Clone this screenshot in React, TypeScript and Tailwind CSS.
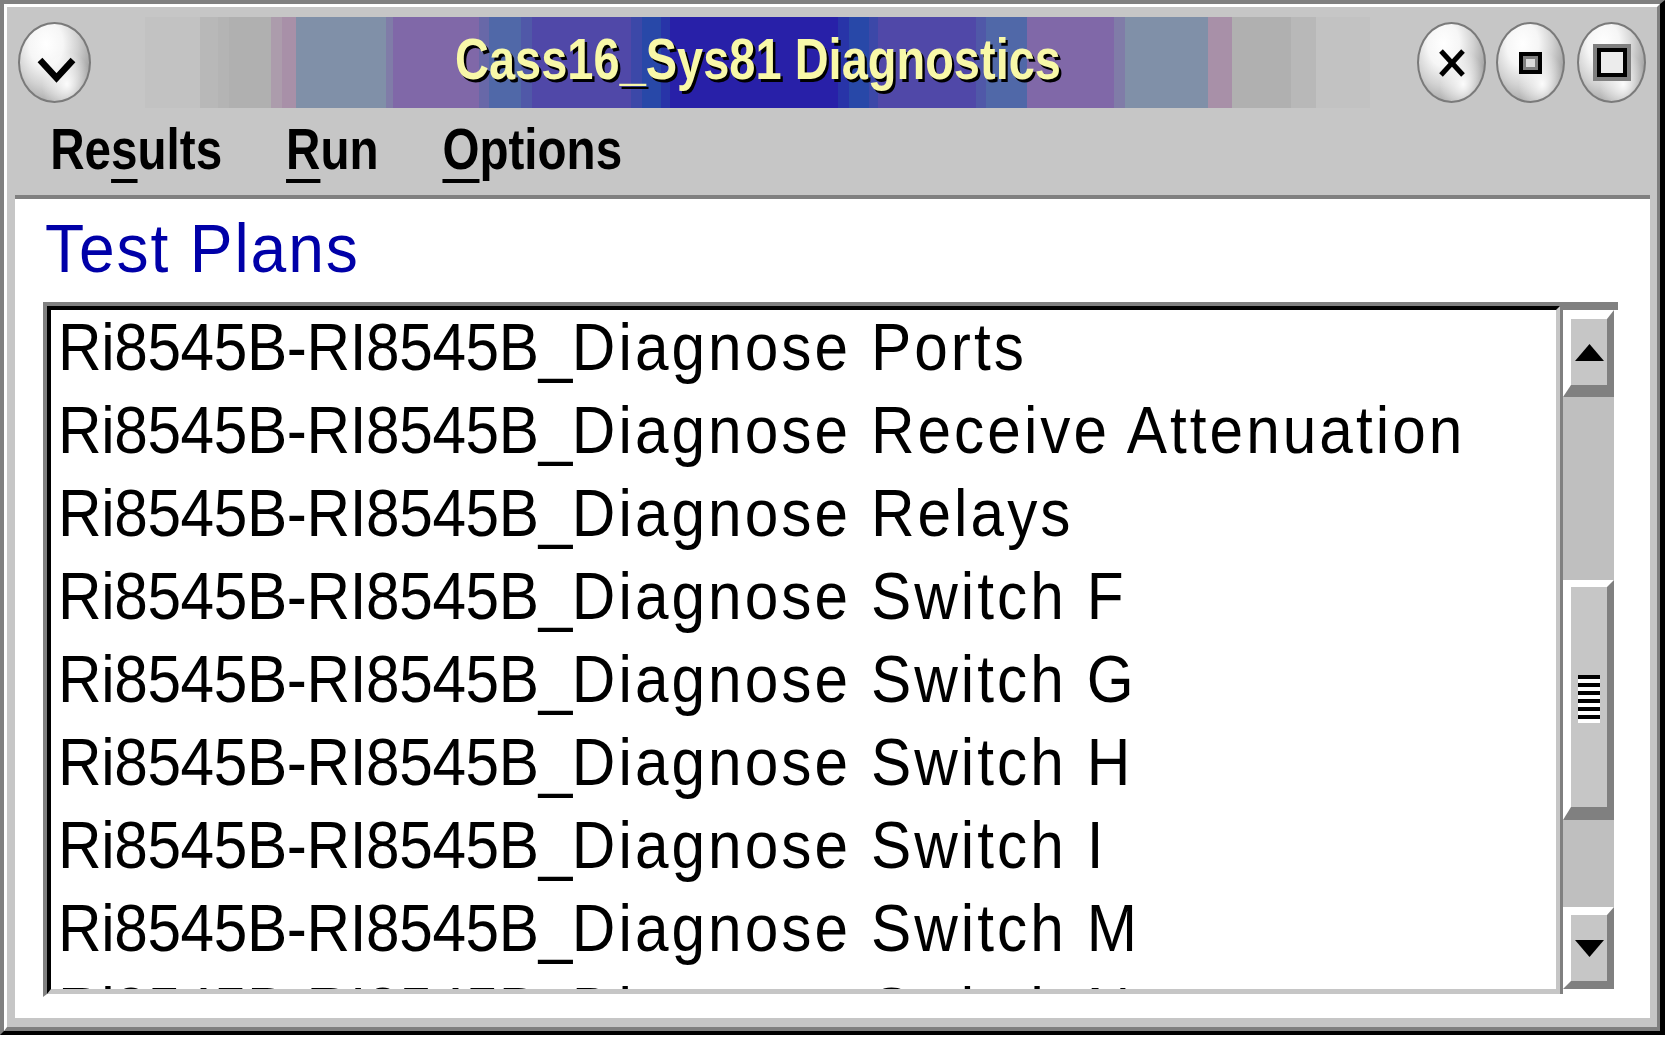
import React from "react";

const SANS = "[font-family:'Liberation_Sans',Arial,sans-serif]";

function Oval({ className, children }: { className: string; children?: React.ReactNode }) {
  return (
    <div
      className={`${className} h-[81px] shrink-0 rounded-[50%] border-[2px] border-[#7a7a7a] bg-[radial-gradient(ellipse_at_68%_78%,rgba(255,255,255,0.95)_0%,rgba(255,255,255,0)_38%),radial-gradient(ellipse_at_38%_26%,#ffffff_0%,#f6f6f6_28%,#d2d2d2_52%,#acacac_72%,#7c7c7c_100%)] flex items-center justify-center`}
    >
      {children}
    </div>
  );
}

const PREFIX = "Ri8545B-RI8545B_";
const rows = [
  "Diagnose Ports",
  "Diagnose Receive Attenuation",
  "Diagnose Relays",
  "Diagnose Switch F",
  "Diagnose Switch G",
  "Diagnose Switch H",
  "Diagnose Switch I",
  "Diagnose Switch M",
  "Diagnose Switch N",
];

export default function App() {
  return (
    <div className="w-[1665px] h-[1038px] bg-white overflow-hidden">
      {/* outer frame */}
      <div className="w-[1665px] h-[1035px] border-t-[4px] border-l-[4px] border-t-[#808080] border-l-[#808080] border-r-[5px] border-b-[4px] border-r-black border-b-black">
        <div className="h-full border-t-[3px] border-l-[3px] border-t-white border-l-white border-r-[3px] border-b-[4px] border-r-[#808080] border-b-[#808080] bg-[#c6c6c6] pt-[10px] pl-[8px] pr-[7px] pb-[9px] flex flex-col">
          {/* title bar */}
          <div className="h-[91px] shrink-0 flex items-center">
            <Oval className="w-[73px] ml-[3px]">
              <svg width="39" height="26" viewBox="0 0 39 26" className="mt-[14px] ml-[4px]">
                <polyline points="3,3 19.5,21 36,3" fill="none" stroke="black" strokeWidth="6.5" strokeLinejoin="miter" />
              </svg>
            </Oval>
            <div className="ml-[54px] w-[1225px] h-[91px] shrink-0 flex justify-center overflow-hidden bg-[linear-gradient(to_right,#c2c2c2_0px,#c2c2c2_55px,#b8b8b8_55px,#b8b8b8_73px,#b4b4b4_73px,#b4b4b4_84px,#b0b0b0_84px,#b0b0b0_126px,#ac9cac_126px,#ac9cac_137px,#a890a8_137px,#a890a8_151px,#8090a8_151px,#8090a8_241px,#807ca8_241px,#807ca8_248px,#8068a8_248px,#8068a8_334px,#6868a8_334px,#6868a8_344px,#5068a8_344px,#5068a8_376px,#5058a8_376px,#5058a8_387px,#5048a8_387px,#5048a8_486px,#3c48a8_486px,#3c48a8_497px,#2848a8_497px,#2848a8_516px,#2834a8_516px,#2834a8_525px,#2820a8_525px,#2820a8_693px,#2834a8_693px,#2834a8_704px,#2848a8_704px,#2848a8_724px,#3c48a8_724px,#3c48a8_733px,#5048a8_733px,#5048a8_831px,#5058a8_831px,#5058a8_841px,#5068a8_841px,#5068a8_882px,#8068a8_882px,#8068a8_969px,#807ca8_969px,#807ca8_980px,#8090a8_980px,#8090a8_1063px,#a890a8_1063px,#a890a8_1087px,#b0b0b0_1087px,#b0b0b0_1146px,#b8b8b8_1146px,#b8b8b8_1171px,#c2c2c2_1171px,#c2c2c2_1225px)]">
              <span className={`${SANS} shrink-0 font-bold text-[58px] leading-[84px] text-[#f8f8a8] whitespace-nowrap scale-x-[0.81] origin-center [text-shadow:3px_3px_0_#000]`}>
                Cass16_Sys81 Diagnostics
              </span>
            </div>
            <Oval className="w-[69px] ml-[47px]">
              <svg width="28" height="30" viewBox="0 0 28 30">
                <line x1="3" y1="3" x2="25" y2="27" stroke="black" strokeWidth="5" />
                <line x1="25" y1="3" x2="3" y2="27" stroke="black" strokeWidth="5" />
              </svg>
            </Oval>
            <Oval className="w-[69px] ml-[10px]">
              <div className="w-[23px] h-[22px] border-[4px] border-black">
                <div className="w-full h-full border-[3px] border-[#808080] bg-[#dcdcdc]" />
              </div>
            </Oval>
            <Oval className="w-[69px] ml-[12px]">
              <div className="w-[38px] h-[37px] border-[4px] border-[#808080]">
                <div className="w-full h-full border-[4px] border-black bg-[#ececec]" />
              </div>
            </Oval>
          </div>

          {/* menu bar */}
          <div className="h-[87px] shrink-0 overflow-hidden">
            <div className={`${SANS} w-max -mt-[3px] flex items-start pl-[43px] gap-[78px] font-bold text-[58px] leading-[87px] text-black scale-x-[0.82] origin-left whitespace-nowrap`}>
              <span>
                Re<span className="underline decoration-[4px] underline-offset-[10px]">s</span>ults
              </span>
              <span>
                <span className="underline decoration-[4px] underline-offset-[10px]">R</span>un
              </span>
              <span>
                <span className="underline decoration-[4px] underline-offset-[10px]">O</span>ptions
              </span>
            </div>
          </div>

          {/* content panel */}
          <div className="flex-1 min-h-0 border-t-[4px] border-t-[#808080] bg-white pl-[28px] pr-[32px] pb-[21px] flex flex-col">
            <div className="h-[103px] shrink-0 pl-[2px]">
              <div className={`${SANS} w-max text-[69px] leading-[100px] tracking-[2px] text-[#0000a8] scale-x-[0.93] origin-left whitespace-nowrap`}>
                Test Plans
              </div>
            </div>
            <div className="h-[695px] shrink-0 flex">
              {/* list */}
              <div className="flex-1 min-w-0 border-t-[4px] border-l-[4px] border-t-[#808080] border-l-[#808080] border-b-[3px] border-b-white">
                <div className="h-full border-t-[4px] border-l-[4px] border-t-black border-l-black border-b-[5px] border-r-[4px] border-b-[#c6c6c6] border-r-[#c6c6c6] overflow-hidden pl-[7px]">
                  <div className={`${SANS} w-max -mt-[5px] text-[67px] leading-[83px] text-black scale-x-[0.9] origin-top-left`}>
                    {rows.map((r, i) => (
                      <div key={i} className="whitespace-nowrap">
                        <span className="tracking-[-0.4px]">{PREFIX}</span>
                        <span className="tracking-[3.4px]">{r}</span>
                      </div>
                    ))}
                  </div>
                </div>
              </div>
              {/* scrollbar */}
              <div className="w-[58px] h-[692px] shrink-0 border-t-[8px] border-l-[3px] border-t-[#808080] border-l-[#808080] bg-white pr-[4px] pb-[5px] flex">
                <div className="flex-1 bg-[#bfbfbf] flex flex-col">
                  <div className="h-[87px] shrink-0 border-t-[9px] border-l-[8px] border-t-white border-l-white border-b-[12px] border-r-[7px] border-b-[#808080] border-r-[#808080] bg-[#c6c6c6] flex items-center justify-center">
                    <svg width="29" height="17" viewBox="0 0 29 17">
                      <polygon points="14.5,0 29,17 0,17" fill="black" />
                    </svg>
                  </div>
                  <div className="h-[183px] shrink-0" />
                  <div className="h-[240px] shrink-0 border-t-[7px] border-l-[8px] border-t-white border-l-white border-b-[13px] border-r-[7px] border-b-[#808080] border-r-[#808080] bg-[#c6c6c6] flex items-center justify-center">
                    <div className="w-[22px] mt-[4px] flex flex-col">
                      <div className="h-[8px] bg-black border-b-[4px] border-b-white" />
                      <div className="h-[8px] bg-black border-b-[4px] border-b-white" />
                      <div className="h-[8px] bg-black border-b-[4px] border-b-white" />
                      <div className="h-[8px] bg-black border-b-[4px] border-b-white" />
                      <div className="h-[8px] bg-black border-b-[4px] border-b-white" />
                      <div className="h-[8px] bg-black border-b-[4px] border-b-white" />
                    </div>
                  </div>
                  <div className="h-[87px] shrink-0" />
                  <div className="h-[82px] shrink-0 border-t-[8px] border-l-[8px] border-t-white border-l-white border-b-[8px] border-r-[7px] border-b-[#808080] border-r-[#808080] bg-[#c6c6c6] flex items-center justify-center">
                    <svg width="29" height="17" viewBox="0 0 29 17">
                      <polygon points="0,0 29,0 14.5,17" fill="black" />
                    </svg>
                  </div>
                </div>
              </div>
            </div>
          </div>
        </div>
      </div>
    </div>
  );
}
